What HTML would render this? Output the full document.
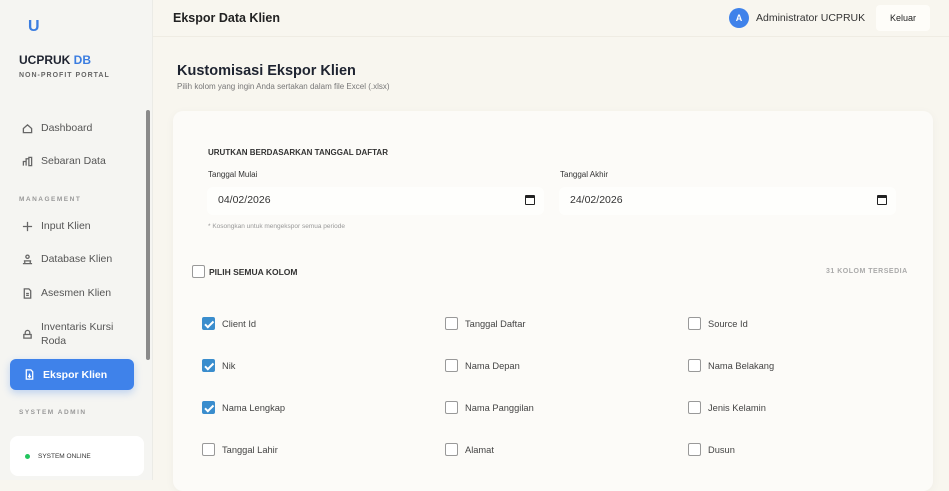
<!DOCTYPE html>
<html><head><meta charset="utf-8"><style>
*{box-sizing:border-box;margin:0;padding:0}
body{width:949px;height:480px;overflow:hidden;font-family:"Liberation Sans",sans-serif;background:#f8f6ef;position:relative;color:#333}
.sb{position:absolute;left:0;top:0;width:153px;height:480px;background:#f5f5f2;border-right:1px solid #ebebe6}
.logo{position:absolute;left:28px;top:18px;color:#3b7de0;font-weight:bold;font-size:16px}
.brand{position:absolute;left:19px;top:53px;font-weight:bold;font-size:12px;color:#1e2330}
.brand span{color:#3b7de0}
.sub{position:absolute;left:19px;top:72px;font-size:7px;letter-spacing:1px;color:#666;font-weight:bold}
.nav{position:absolute;left:22px;font-size:10.5px;color:#555;display:flex;align-items:center;gap:8px}
.nav svg{width:11px;height:11px;stroke:#666;fill:none;stroke-width:1.4}
.sec{position:absolute;left:19px;font-size:6.5px;letter-spacing:1.5px;color:#999;font-weight:bold}
.active{position:absolute;left:10px;top:359px;width:124px;height:31px;background:#3f82ea;border-radius:6px;box-shadow:0 3px 8px rgba(63,130,234,.3);color:#fff;font-weight:bold;font-size:10.5px;display:flex;align-items:center;padding-left:14px;gap:8px}
.scroll{position:absolute;left:146px;top:110px;width:4px;height:250px;background:#8a8a8a;border-radius:2px}
.status{position:absolute;left:10px;top:436px;width:134px;height:40px;background:#fff;border-radius:8px;font-size:6.5px;color:#333;display:flex;align-items:center;padding-left:15px;gap:8px}
.status i{width:5px;height:5px;border-radius:50%;background:#22c55e}
.top{position:absolute;left:153px;top:0;right:0;height:37px;border-bottom:1px solid #efece3}
.title{position:absolute;left:173px;top:11px;font-size:12.5px;font-weight:bold;color:#222}
.av{position:absolute;left:729px;top:8px;width:20px;height:20px;border-radius:50%;background:#3f82ea;color:#fff;font-size:9px;font-weight:bold;text-align:center;line-height:20px}
.adm{position:absolute;left:756px;top:12px;font-size:10.5px;color:#333}
.out{position:absolute;left:876px;top:5px;width:54px;height:26px;background:#fefdf9;border-radius:4px;font-size:9px;text-align:center;line-height:26px;color:#222}
h1{position:absolute;left:177px;top:63px;font-size:14.5px;color:#1e2330}
.desc{position:absolute;left:177px;top:82px;font-size:8px;color:#777}
.card{position:absolute;left:173px;top:111px;width:760px;height:380px;background:#fcfbf8;border-radius:10px;box-shadow:0 2px 10px rgba(0,0,0,.04)}
.t{position:absolute;font-size:8px;color:#333}
.b{font-weight:bold}
.inp{position:absolute;top:187px;height:28px;background:#fefefc;border-radius:6px;font-size:10.5px;color:#333;padding:7px 11px}
.cal{position:absolute;right:9px;top:8px;width:10px;height:10px;border:1.5px solid #222;border-top-width:3px;border-radius:1px}
.cb{position:absolute;width:13px;height:13px;border:1px solid #999;border-radius:2px;background:#fff}
.cb.on{background:#3a8dcd;border-color:#3a8dcd}
.cb.on::after{content:"";position:absolute;left:3.5px;top:0.5px;width:3.5px;height:7.5px;border:solid #fff;border-width:0 2px 2px 0;transform:rotate(45deg);box-sizing:content-box;width:2.5px;height:6.5px}
.lbl{position:absolute;font-size:9.3px;color:#444}
</style></head><body>
<div class="sb">
<div class="logo">U</div>
<div class="brand">UCPRUK <span>DB</span></div>
<div class="sub">NON-PROFIT PORTAL</div>
<div class="nav" style="top:122px"><svg viewBox="0 0 12 12"><path d="M1.5 6L6 2l4.5 4v4.5h-9z"/></svg>Dashboard</div>
<div class="nav" style="top:155px"><svg viewBox="0 0 12 12"><path d="M1.5 10.5V6h3v4.5M4.5 10.5V3h3v7.5M7.5 10.5V1.5h3v9z"/></svg>Sebaran Data</div>
<div class="sec" style="top:196px">MANAGEMENT</div>
<div class="nav" style="top:220px"><svg viewBox="0 0 12 12"><path d="M6 1v10M1 6h10"/></svg>Input Klien</div>
<div class="nav" style="top:253px"><svg viewBox="0 0 12 12"><circle cx="6" cy="3" r="1.8"/><path d="M2 7.5h8M1 10.5h10M3 7.5v3M9 7.5v3"/></svg>Database Klien</div>
<div class="nav" style="top:287px"><svg viewBox="0 0 12 12"><path d="M2.5 1h5l2 2v8h-7zM4.5 6h3M4.5 8h3"/></svg>Asesmen Klien</div>
<div class="nav" style="top:320px;align-items:center"><svg viewBox="0 0 12 12"><path d="M2 6h8v4H2zM3.5 6V4a2.5 2.5 0 0 1 5 0v2"/></svg><span style="line-height:14px">Inventaris Kursi<br>Roda</span></div>
<div class="active"><svg viewBox="0 0 12 12" style="width:11px;height:11px;stroke:#fff;fill:none;stroke-width:1.4"><path d="M2.5 1h5l2 2v8h-7zM6 5v4M4.5 7.5L6 9l1.5-1.5"/></svg>Ekspor Klien</div>
<div class="sec" style="top:409px">SYSTEM ADMIN</div>
<div class="scroll"></div>
<div class="status"><i></i>SYSTEM ONLINE</div>
</div>
<div class="top"></div>
<div class="title">Ekspor Data Klien</div>
<div class="av">A</div>
<div class="adm">Administrator UCPRUK</div>
<div class="out">Keluar</div>
<h1>Kustomisasi Ekspor Klien</h1>
<div class="desc">Pilih kolom yang ingin Anda sertakan dalam file Excel (.xlsx)</div>
<div class="card"></div>
<div class="t b" style="left:208px;top:148px">URUTKAN BERDASARKAN TANGGAL DAFTAR</div>
<div class="t" style="left:208px;top:170px">Tanggal Mulai</div>
<div class="t" style="left:560px;top:170px">Tanggal Akhir</div>
<div class="inp" style="left:207px;width:337px">04/02/2026<span class="cal"></span></div>
<div class="inp" style="left:559px;width:337px">24/02/2026<span class="cal"></span></div>
<div class="t" style="left:208px;top:223px;font-size:6.5px;color:#999">* Kosongkan untuk mengekspor semua periode</div>
<div class="cb" style="left:192px;top:265px"></div>
<div class="t b" style="left:209px;top:267px;font-size:8.5px">PILIH SEMUA KOLOM</div>
<div class="t b" style="left:826px;top:268px;font-size:7px;color:#aaa;letter-spacing:.5px">31 KOLOM TERSEDIA</div>
<div class="cb on" style="left:202px;top:317px"></div><div class="lbl" style="left:222px;top:319px">Client Id</div>
<div class="cb" style="left:445px;top:317px"></div><div class="lbl" style="left:465px;top:319px">Tanggal Daftar</div>
<div class="cb" style="left:688px;top:317px"></div><div class="lbl" style="left:708px;top:319px">Source Id</div>
<div class="cb on" style="left:202px;top:359px"></div><div class="lbl" style="left:222px;top:361px">Nik</div>
<div class="cb" style="left:445px;top:359px"></div><div class="lbl" style="left:465px;top:361px">Nama Depan</div>
<div class="cb" style="left:688px;top:359px"></div><div class="lbl" style="left:708px;top:361px">Nama Belakang</div>
<div class="cb on" style="left:202px;top:401px"></div><div class="lbl" style="left:222px;top:403px">Nama Lengkap</div>
<div class="cb" style="left:445px;top:401px"></div><div class="lbl" style="left:465px;top:403px">Nama Panggilan</div>
<div class="cb" style="left:688px;top:401px"></div><div class="lbl" style="left:708px;top:403px">Jenis Kelamin</div>
<div class="cb" style="left:202px;top:443px"></div><div class="lbl" style="left:222px;top:445px">Tanggal Lahir</div>
<div class="cb" style="left:445px;top:443px"></div><div class="lbl" style="left:465px;top:445px">Alamat</div>
<div class="cb" style="left:688px;top:443px"></div><div class="lbl" style="left:708px;top:445px">Dusun</div>
</body></html>
